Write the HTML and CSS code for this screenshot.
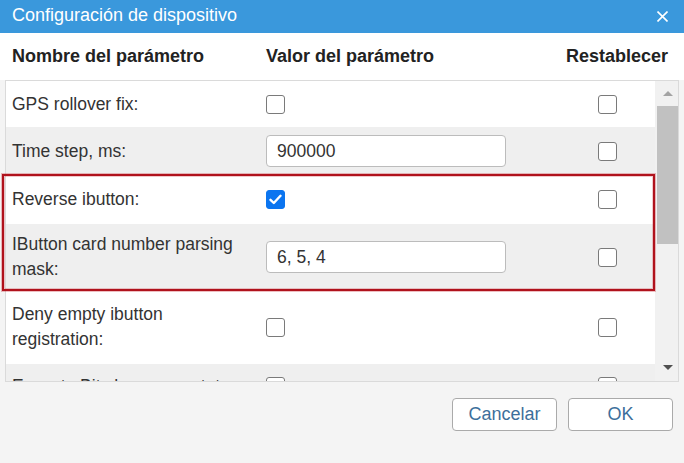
FILE: index.html
```html
<!DOCTYPE html>
<html lang="es">
<head>
<meta charset="utf-8">
<title>Configuración de dispositivo</title>
<link rel="stylesheet" href="styles.css">
</head>
<body>
<div class="dialog">
  <div class="titlebar">
    <span class="title">Configuración de dispositivo</span>
    <svg class="close" width="11" height="11" viewBox="0 0 11 11"><path d="M0.5 0.5 L10.5 10.5 M10.5 0.5 L0.5 10.5" stroke="#fff" stroke-width="1.6" fill="none"/></svg>
  </div>
  <div class="colhead">
    <span>Nombre del parámetro</span>
    <span>Valor del parámetro</span>
    <span class="reset-head">Restablecer</span>
  </div>
  <div class="grid-wrap">
    <div class="table">
      <div class="rows">
        <div class="row">
          <div class="name">GPS rollover fix:</div>
          <div class="value"><span class="cb"></span></div>
          <div class="reset"><span class="cb"></span></div>
        </div>
        <div class="row alt with-input">
          <div class="name">Time step, ms:</div>
          <div class="value"><input class="field" type="text" value="900000"></div>
          <div class="reset"><span class="cb"></span></div>
        </div>
        <div class="row">
          <div class="name">Reverse ibutton:</div>
          <div class="value"><span class="cb checked"><svg width="13" height="11" viewBox="0 0 13 11"><path d="M1.5 5.8 L4.8 9 L11.5 1.8" stroke="#fff" stroke-width="2.4" fill="none" stroke-linecap="round" stroke-linejoin="round"/></svg></span></div>
          <div class="reset"><span class="cb"></span></div>
        </div>
        <div class="row alt with-input">
          <div class="name">IButton card number parsing mask:</div>
          <div class="value"><input class="field" type="text" value="6, 5, 4"></div>
          <div class="reset"><span class="cb"></span></div>
        </div>
        <div class="row">
          <div class="name">Deny empty ibutton registration:</div>
          <div class="value"><span class="cb"></span></div>
          <div class="reset"><span class="cb"></span></div>
        </div>
        <div class="row alt last">
          <div class="name">Execute Bit change on state:</div>
          <div class="value"><span class="cb"></span></div>
          <div class="reset"><span class="cb"></span></div>
        </div>
      </div>
      <div class="scrollbar">
        <div class="sb-btn"><span class="arrow-up"></span></div>
        <div class="thumb"></div>
        <div class="sb-space"></div>
        <div class="sb-btn sb-btn-down"><span class="arrow-down"></span></div>
      </div>
    </div>
    <div class="highlight"></div>
  </div>
  <div class="footer">
    <button class="btn">Cancelar</button>
    <button class="btn">OK</button>
  </div>
</div>
</body>
</html>
```

FILE: styles.css
```css
* { box-sizing: border-box; }

html, body {
  margin: 0;
  padding: 0;
}

body {
  background: #f4f4f4;
  font-family: "Liberation Sans", Arial, sans-serif;
  color: #333;
}

.dialog {
  width: 684px;
  height: 463px;
  display: flex;
  flex-direction: column;
  background: #f4f4f4;
  overflow: hidden;
}

.titlebar {
  height: 33px;
  flex: none;
  background: #3a98dc;
  color: #fff;
  display: flex;
  align-items: center;
  justify-content: space-between;
  padding: 0 16px 2px 12px;
  font-size: 18px;
}

.close { display: block; margin-top: 2px; }

.colhead {
  height: 47px;
  flex: none;
  background: #fff;
  display: grid;
  grid-template-columns: 236px 1fr auto;
  column-gap: 18px;
  align-items: center;
  padding: 0 16px 0 12px;
  font-weight: bold;
  font-size: 18px;
  color: #222;
}

.grid-wrap {
  position: relative;
  margin: 0 5px;
  flex: none;
}

.table {
  height: 302px;
  border: 1px solid #dadada;
  background: #fff;
  display: flex;
}

.rows {
  flex: 1;
  overflow: hidden;
}

.row {
  display: grid;
  grid-template-columns: 236px 1fr 57px;
  column-gap: 18px;
  align-items: center;
  padding: 12px 0 12px 6px;
  background: #fff;
  font-size: 17.5px;
  line-height: 25px;
}

.row:first-child { padding-top: 10.5px; padding-bottom: 10.5px; }
.row.alt { background: #efefef; }
.row.with-input { padding-top: 8px; padding-bottom: 8px; }
.row.last { padding-top: 10px; }

.value, .reset {
  display: flex;
  align-items: center;
}

.cb {
  width: 19px;
  height: 19px;
  border: 1px solid #7a7a7a;
  border-radius: 3px;
  background: #fff;
  display: inline-flex;
  align-items: center;
  justify-content: center;
}

.cb.checked {
  background: #0b75f0;
  border-color: #0b75f0;
}

.field {
  width: 240px;
  height: 32px;
  border: 1px solid #bcbcbc;
  border-radius: 4px;
  background: #fff;
  padding: 0 10px;
  font-family: "Liberation Sans", Arial, sans-serif;
  font-size: 17.5px;
  color: #333;
  outline: none;
}

.scrollbar {
  width: 23px;
  flex: none;
  background: #f1f1f1;
  display: flex;
  flex-direction: column;
}

.sb-btn {
  height: 24px;
  display: flex;
  align-items: center;
  justify-content: center;
  padding-left: 2px;
}

.sb-btn-down { height: 26px; padding-bottom: 2px; }

.arrow-up {
  width: 0;
  height: 0;
  border-left: 5px solid transparent;
  border-right: 5px solid transparent;
  border-bottom: 5px solid #a3a3a3;
}

.arrow-down {
  width: 0;
  height: 0;
  border-left: 5px solid transparent;
  border-right: 5px solid transparent;
  border-top: 5px solid #505050;
}

.thumb {
  height: 138px;
  margin: 1px 0 0 2px;
  background: #c1c1c1;
}

.sb-space { flex: 1; }

.highlight {
  position: absolute;
  left: -3px;
  top: 94px;
  width: 653px;
  height: 117px;
  border: 2px solid #b0121c;
  box-shadow: 0 0 0 1px rgba(200, 40, 50, 0.3), inset 0 0 0 1px rgba(200, 40, 50, 0.25);
  pointer-events: none;
}

.footer {
  flex: 1;
  display: flex;
  justify-content: flex-end;
  align-items: flex-start;
  gap: 11px;
  padding: 16px 11px 0 0;
}

.btn {
  width: 105px;
  height: 33px;
  border: 1px solid #aaa;
  border-radius: 4px;
  background: #fff;
  color: #3d6f9b;
  font-family: "Liberation Sans", Arial, sans-serif;
  font-size: 18px;
  padding: 0;
}
```
